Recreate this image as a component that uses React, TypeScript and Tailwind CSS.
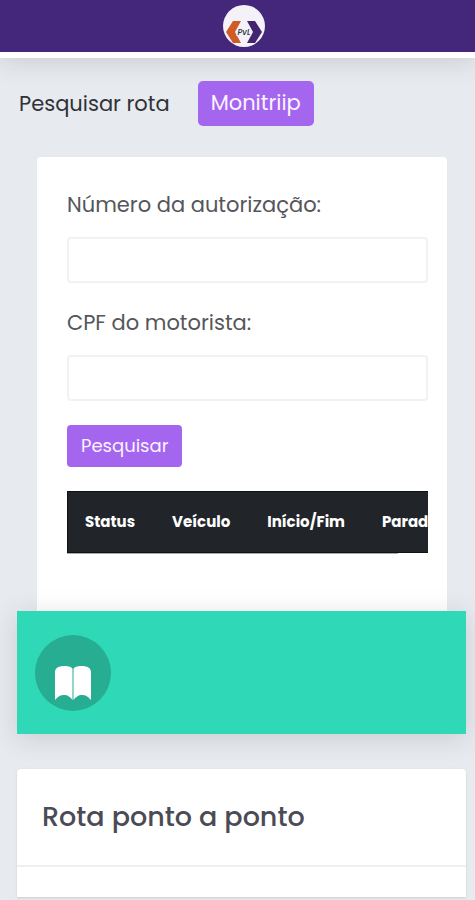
import { type FormEvent, useState } from 'react'

const columns = ['Status', 'Veículo', 'Início/Fim', 'Paradas']

function Logo() {
  return (
    <svg viewBox="0 0 42 42" className="w-[42px] h-[42px]" role="img" aria-label="PvL">
      <circle cx="21" cy="21" r="21" fill="#f4f1f8" />
      <path d="M10 16h8l-6 11 6 11h-8L3 27z" fill="#cf5c26" />
      <path d="M24 16h8l7 11-7 11h-8l6-11z" fill="#432470" />
      <text x="21" y="30" textAnchor="middle" fontSize="8" fontWeight="500" fontStyle="italic" fill="#2b3038" stroke="#f4f1f8" strokeWidth="2" paintOrder="stroke">PvL</text>
    </svg>
  )
}

function BookIcon() {
  return (
    <svg viewBox="0 0 36 36" className="w-9 h-9 mt-5" fill="#fff" aria-hidden="true">
      <path d="M0 7C0 3 4 1 9 1s8 1 8.500 3v31c-2-3-5-5-8-5-4 0-6 1-9.500 5z" />
      <path d="M36 7c0-4-4-6-9-6s-8 1-8.500 3v31c2-3 5-5 8-5 4 0 6 1 9.500 5z" />
    </svg>
  )
}

type FieldProps = { id: string; label: string; value: string; onChange: (v: string) => void }

function Field({ id, label, value, onChange }: FieldProps) {
  return (
    <div className="mb-6">
      <label htmlFor={id} className="block text-[21px] leading-8 mb-4 text-[#55565b]">{label}</label>
      <input
        id={id}
        value={value}
        onChange={e => onChange(e.target.value)}
        className="block w-full h-[46px] px-3 text-lg border-2 border-[#f2f2f4] rounded bg-white"
      />
    </div>
  )
}

export default function App() {
  const [autorizacao, setAutorizacao] = useState('')
  const [cpf, setCpf] = useState('')

  function onSubmit(e: FormEvent) {
    e.preventDefault()
  }

  return (
    <div className="min-h-screen bg-[#e7eaef] font-['Poppins','Inter',sans-serif] text-[#303237] pb-[3px]">
      <header className="flex justify-center h-[58px] pl-3 pt-[5px] bg-[#44267a] border-b-6 border-white shadow-[0_4px_24px_rgba(70,80,70,0.18)]">
        <Logo />
      </header>

      <nav className="flex items-center gap-7 pl-[19px] mt-[23px] text-[21px] leading-8">
        <a href="#rota">Pesquisar rota</a>
        <a href="#monitriip" className="h-[45px] px-[13px] py-[6px] rounded-[5px] bg-[#a466ef] text-[#fbf3ff]">Monitriip</a>
      </nav>

      <main>
        <section className="mt-[31px] ml-[37px] mr-7 pt-8 pl-[30px] pr-[19px] pb-[57px] bg-white rounded-t-sm">
          <form onSubmit={onSubmit}>
            <Field id="autorizacao" label="Número da autorização:" value={autorizacao} onChange={setAutorizacao} />
            <Field id="cpf" label="CPF do motorista:" value={cpf} onChange={setCpf} />
            <button type="submit" className="block h-[42px] px-[14px] rounded bg-[#a466ef] text-[#fbf3ff] text-[18px] leading-8">
              Pesquisar
            </button>
          </form>
          <div className="mt-6 overflow-x-auto [scrollbar-width:none]">
            <table className="whitespace-nowrap bg-[#212529] text-white text-[15px] leading-6">
              <thead>
                <tr className="border border-[#101214]">
                  {columns.map(c => (
                    <th key={c} scope="col" className="h-[61px] pl-[17px] pr-5 text-left font-bold">{c}</th>
                  ))}
                </tr>
              </thead>
            </table>
          </div>
          <div className="h-px w-11/12 bg-[#a9abad]" />
        </section>

        <section className="relative ml-[17px] mr-[9px] h-[123px] px-[18px] py-6 bg-[#2fd8b7] shadow-[0_4px_24px_rgba(70,80,70,0.18)]">
          <div className="flex items-center justify-center w-[76px] h-[76px] rounded-full bg-[#26ad92]">
            <BookIcon />
          </div>
        </section>

        <section className="mt-[35px] ml-[17px] mr-[9px] bg-white rounded-t-sm shadow-sm">
          <h2 className="px-[25px] pt-7 pb-7 text-[27px] leading-10 font-medium text-[#4b4b55] border-b-2 border-[#efeff2]">
            Rota ponto a ponto
          </h2>
          <div className="h-[30px]" />
        </section>
      </main>
    </div>
  )
}
